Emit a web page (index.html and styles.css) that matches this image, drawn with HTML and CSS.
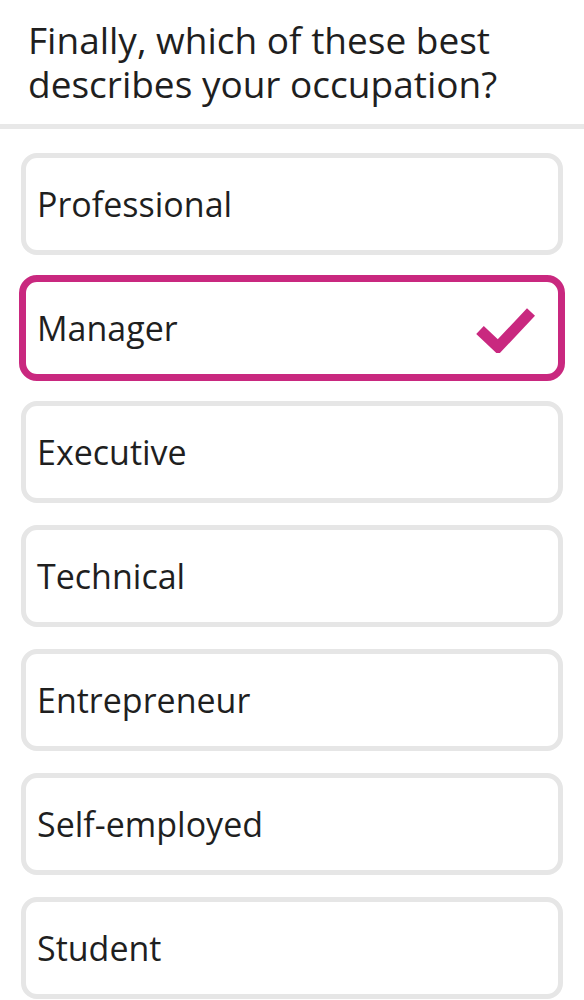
FILE: index.html
```html
<!DOCTYPE html>
<html lang="en">
<head>
  <meta charset="UTF-8">
  <title>Occupation</title>
  <link rel="stylesheet" href="styles.css">
</head>
<body>
  <div class="question">
    <h1>Finally, which of these best describes your occupation?</h1>
  </div>

  <div class="options">
    <div class="option">Professional</div>
    <div class="option selected">
      Manager
      <svg class="check" width="60" height="50" viewBox="0 0 60 50">
        <path d="M4 27 L22 44 L55 9" fill="none" stroke="#c9287f" stroke-width="11"/>
      </svg>
    </div>
    <div class="option">Executive</div>
    <div class="option">Technical</div>
    <div class="option">Entrepreneur</div>
    <div class="option">Self-employed</div>
    <div class="option">Student</div>
  </div>
</body>
</html>
```

FILE: styles.css
```css
body {
  margin: 0;
  background: #fff;
  color: #1f1f1f;
  font-family: "Open Sans", "Noto Sans", sans-serif;
}
.question {
  padding: 18px 28px 18px;
  border-bottom: 5px solid #e8e8e8;
}
h1 {
  margin: 0;
  font-size: 37px;
  font-weight: 400;
  line-height: 44px;
}
.options {
  display: flex;
  flex-direction: column;
  gap: 22px;
  padding: 24px 21px;
}
.option {
  display: flex;
  align-items: center;
  justify-content: space-between;
  height: 92px;
  padding: 0 22px 0 11px;
  border: 5px solid #e6e6e6;
  border-radius: 16px;
  font-size: 34px;
}
.option.selected {
  border: 7px solid #c9287f;
  margin: -2px;
  border-radius: 18px;
}
.check {
  display: block;
}
```
